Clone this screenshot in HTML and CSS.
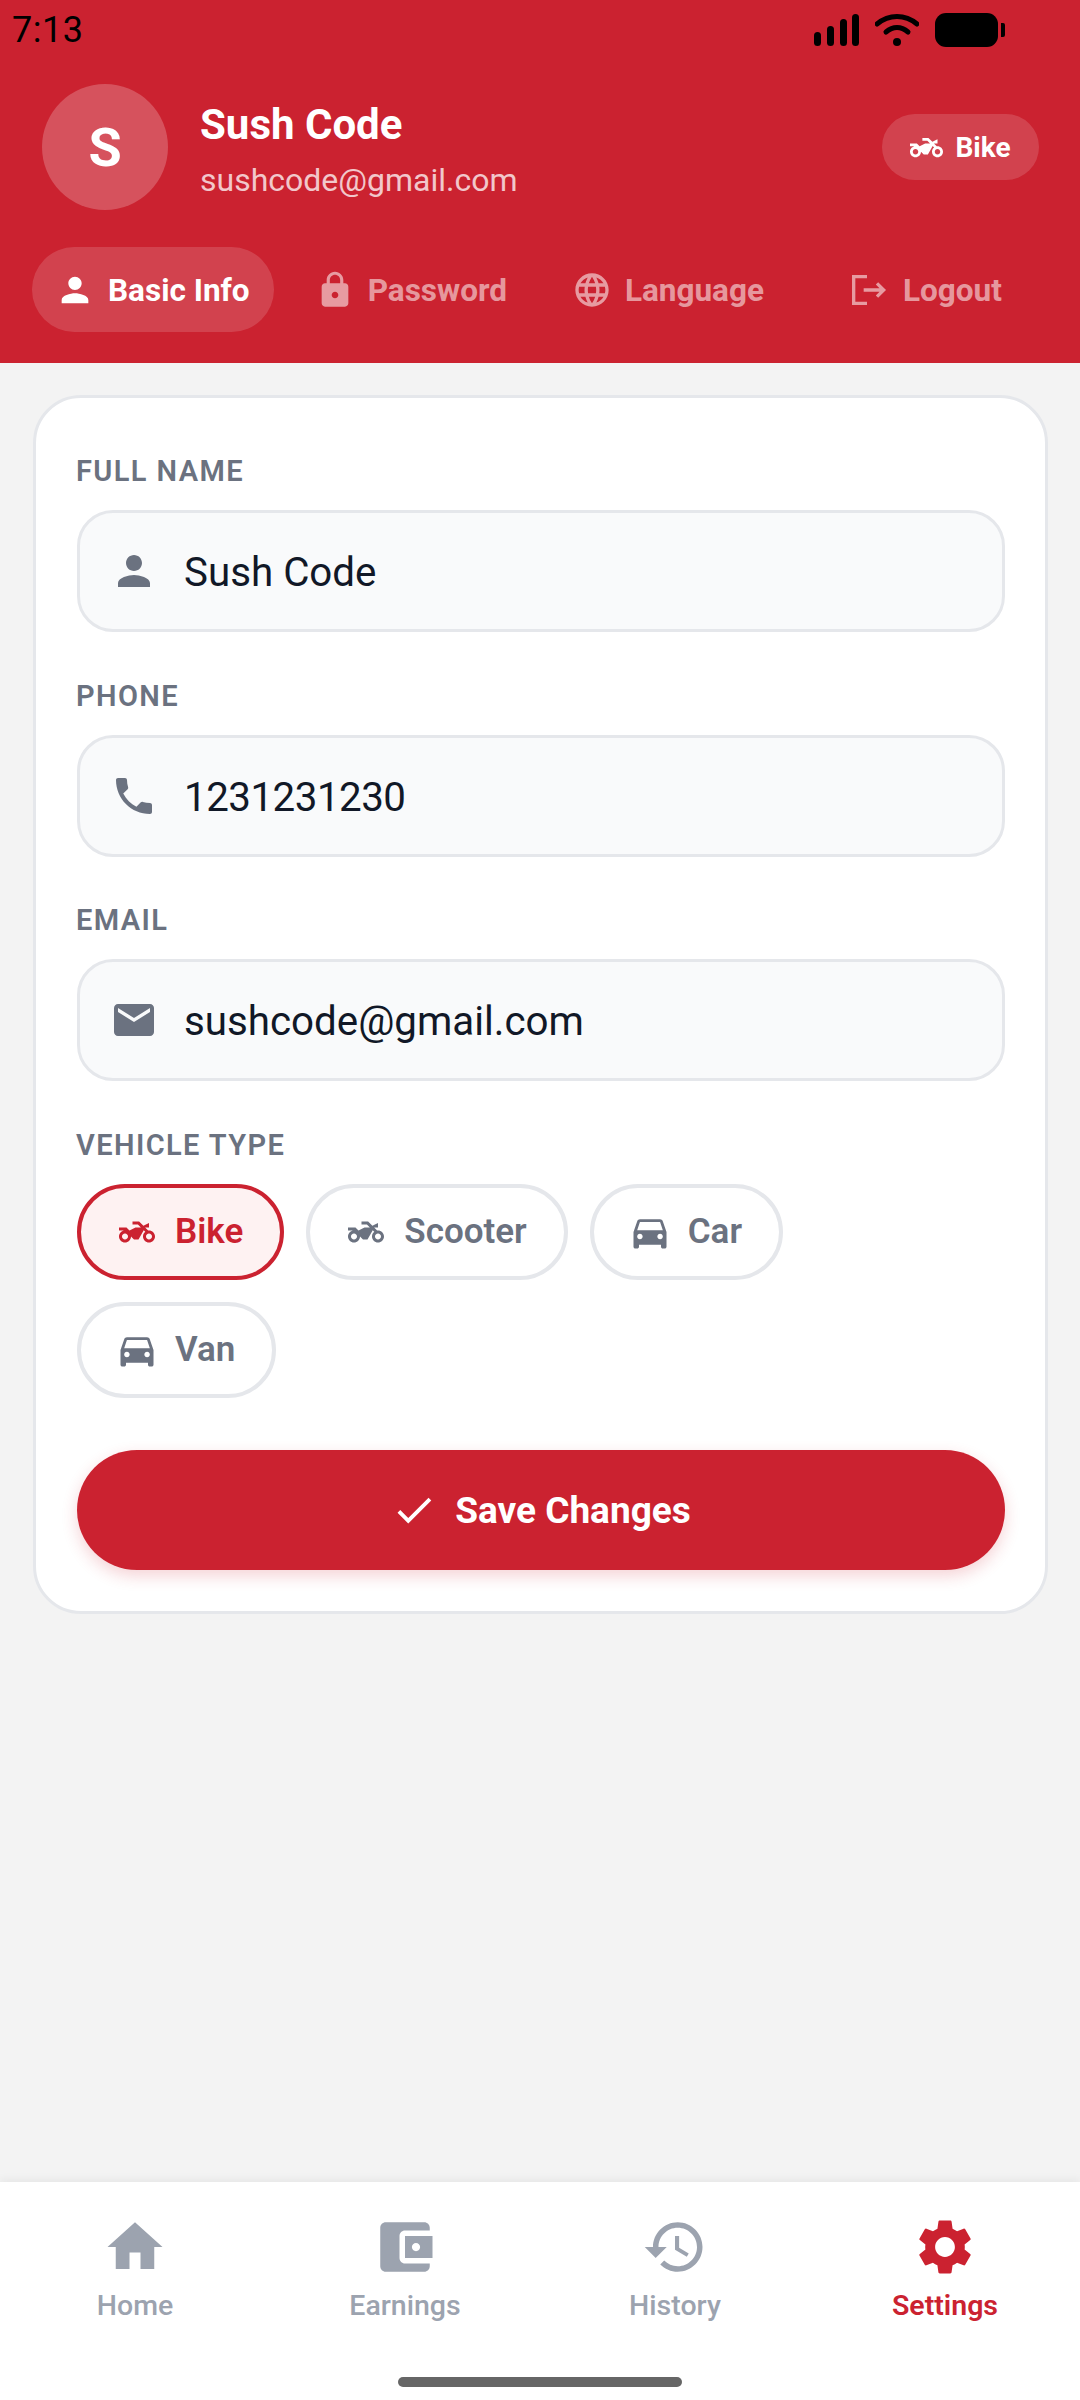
FILE: index.html
```html
<!DOCTYPE html>
<html lang="en">
<head>
    <meta charset="UTF-8">
    <meta name="viewport" content="width=device-width, initial-scale=1.0">
    <title>Settings</title>
    <link rel="stylesheet" href="styles.css">
</head>
<body>
    <svg class="defs" width="0" height="0">
        <symbol id="i-person" viewBox="0 0 24 24"><path d="M12 12c2.21 0 4-1.79 4-4s-1.79-4-4-4-4 1.79-4 4 1.79 4 4 4zm0 2c-2.67 0-8 1.34-8 4v2h16v-2c0-2.66-5.33-4-8-4z"/></symbol>
        <symbol id="i-lock" viewBox="0 0 24 24"><path d="M18 8h-1V6c0-2.76-2.24-5-5-5S7 3.24 7 6v2H6c-1.1 0-2 .9-2 2v10c0 1.1.9 2 2 2h12c1.1 0 2-.9 2-2V10c0-1.1-.9-2-2-2zm-6 9c-1.1 0-2-.9-2-2s.9-2 2-2 2 .9 2 2-.9 2-2 2zm3.1-9H8.9V6c0-1.71 1.39-3.1 3.1-3.1 1.71 0 3.1 1.39 3.1 3.1v2z"/></symbol>
        <symbol id="i-globe" viewBox="0 0 24 24"><path d="M11.99 2C6.47 2 2 6.48 2 12s4.47 10 9.99 10C17.52 22 22 17.52 22 12S17.52 2 11.99 2zm6.93 6h-2.95c-.32-1.25-.78-2.45-1.38-3.56 1.84.63 3.37 1.91 4.33 3.56zM12 4.04c.83 1.2 1.48 2.53 1.91 3.96h-3.82c.43-1.43 1.08-2.76 1.91-3.96zM4.26 14C4.1 13.36 4 12.69 4 12s.1-1.36.26-2h3.38c-.08.66-.14 1.32-.14 2s.06 1.34.14 2H4.26zm.82 2h2.95c.32 1.25.78 2.45 1.38 3.56-1.84-.63-3.37-1.9-4.33-3.56zm2.95-8H5.08c.96-1.66 2.49-2.93 4.33-3.56C8.81 5.55 8.35 6.75 8.03 8zM12 19.96c-.83-1.2-1.48-2.53-1.91-3.96h3.82c-.43 1.43-1.08 2.76-1.91 3.96zM14.34 14H9.66c-.09-.66-.16-1.32-.16-2s.07-1.35.16-2h4.68c.09.65.16 1.32.16 2s-.07 1.34-.16 2zm.25 5.56c.6-1.11 1.06-2.31 1.38-3.56h2.95c-.96 1.65-2.49 2.93-4.33 3.56zM16.36 14c.08-.66.14-1.32.14-2s-.06-1.34-.14-2h3.38c.16.64.26 1.31.26 2s-.1 1.36-.26 2h-3.38z"/></symbol>
        <symbol id="i-logout" viewBox="0 0 24 24"><path d="M12 4H4v16h8M10 12h12M18 8l4 4-4 4" fill="none" stroke="currentColor" stroke-width="2"/></symbol>
        <symbol id="i-phone" viewBox="0 0 24 24"><path d="M6.62 10.79c1.44 2.83 3.76 5.14 6.59 6.59l2.2-2.2c.27-.27.67-.36 1.02-.24 1.12.37 2.33.57 3.57.57.55 0 1 .45 1 1V20c0 .55-.45 1-1 1-9.39 0-17-7.61-17-17 0-.55.45-1 1-1h3.5c.55 0 1 .45 1 1 0 1.25.2 2.45.57 3.57.11.35.03.74-.25 1.02l-2.2 2.2z"/></symbol>
        <symbol id="i-mail" viewBox="0 0 24 24"><path d="M20 4H4c-1.1 0-1.99.9-1.99 2L2 18c0 1.1.9 2 2 2h16c1.1 0 2-.9 2-2V6c0-1.1-.9-2-2-2zm0 4l-8 5-8-5V6l8 5 8-5v2z"/></symbol>
        <symbol id="i-moto" viewBox="0 0 24 24"><path d="M20 11c-.18 0-.36.03-.53.05L17.41 9H20V6l-3.72 1.86L13.41 5H9v2h3.59l2 2H11l-4 2-2-2H0v2h4c-2.21 0-4 1.79-4 4s1.79 4 4 4 4-1.79 4-4l2 2h3l3.49-6.1 1.01 1.01c-.91.73-1.5 1.84-1.5 3.09 0 2.21 1.79 4 4 4s4-1.79 4-4-1.79-4-4-4zM4 17c-1.1 0-2-.9-2-2s.9-2 2-2 2 .9 2 2-.9 2-2 2zm16 0c-1.1 0-2-.9-2-2s.9-2 2-2 2 .9 2 2-.9 2-2 2z"/></symbol>
        <symbol id="i-car" viewBox="0 0 24 24"><path d="M18.92 6.01C18.72 5.42 18.16 5 17.5 5h-11c-.66 0-1.21.42-1.42 1.01L3 12v8c0 .55.45 1 1 1h1c.55 0 1-.45 1-1v-1h12v1c0 .55.45 1 1 1h1c.55 0 1-.45 1-1v-8l-2.08-5.99zM6.5 16c-.83 0-1.5-.67-1.5-1.5S5.67 13 6.5 13s1.5.67 1.5 1.5S7.33 16 6.5 16zm11 0c-.83 0-1.5-.67-1.5-1.5s.67-1.5 1.5-1.5 1.5.67 1.5 1.5-.67 1.5-1.5 1.5zM5 11l1.5-4.5h11L19 11H5z"/></symbol>
        <symbol id="i-check" viewBox="0 0 24 24"><path d="M9 16.17L4.83 12l-1.42 1.41L9 19 21 7l-1.41-1.41z"/></symbol>
        <symbol id="i-home" viewBox="0 0 24 24"><path d="M10 20v-6h4v6h5v-8h3L12 3 2 12h3v8z"/></symbol>
        <symbol id="i-wallet" viewBox="0 0 24 24"><path d="M21 18v1c0 1.1-.9 2-2 2H5c-1.11 0-2-.9-2-2V5c0-1.1.89-2 2-2h14c1.1 0 2 .9 2 2v1h-9c-1.11 0-2 .9-2 2v8c0 1.1.89 2 2 2h9zm-9-2h10V8H12v8zm4-2.5c-.83 0-1.5-.67-1.5-1.5s.67-1.5 1.5-1.5 1.5.67 1.5 1.5-.67 1.5-1.5 1.5z"/></symbol>
        <symbol id="i-history" viewBox="0 0 24 24"><path d="M13 3c-4.97 0-9 4.03-9 9H1l3.89 3.89.07.14L9 12H6c0-3.87 3.13-7 7-7s7 3.13 7 7-3.13 7-7 7c-1.93 0-3.68-.79-4.94-2.06l-1.42 1.42C8.27 19.99 10.51 21 13 21c4.97 0 9-4.03 9-9s-4.03-9-9-9zm-1 5v5l4.28 2.54.72-1.21-3.5-2.08V8H12z"/></symbol>
        <symbol id="i-gear" viewBox="0 0 24 24"><path d="M19.14 12.94c.04-.3.06-.61.06-.94 0-.32-.02-.64-.07-.94l2.03-1.58c.18-.14.23-.41.12-.61l-1.92-3.32c-.12-.22-.37-.29-.59-.22l-2.39.96c-.5-.38-1.03-.7-1.62-.94l-.36-2.54c-.04-.24-.24-.41-.48-.41h-3.84c-.24 0-.43.17-.47.41l-.36 2.54c-.59.24-1.13.57-1.62.94l-2.39-.96c-.22-.08-.47 0-.59.22L2.74 8.87c-.12.21-.08.47.12.61l2.03 1.58c-.05.3-.09.63-.09.94s.02.64.07.94l-2.03 1.58c-.18.14-.23.41-.12.61l1.92 3.32c.12.22.37.29.59.22l2.39-.96c.5.38 1.03.7 1.62.94l.36 2.54c.05.24.24.41.48.41h3.84c.24 0 .44-.17.47-.41l.36-2.54c.59-.24 1.13-.56 1.62-.94l2.39.96c.22.08.47 0 .59-.22l1.92-3.32c.12-.22.07-.47-.12-.61l-2.01-1.58zM12 15.6c-1.98 0-3.6-1.62-3.6-3.6s1.62-3.6 3.6-3.6 3.6 1.62 3.6 3.6-1.62 3.6-3.6 3.6z"/></symbol>
    </svg>

    <div class="screen">
        <header class="header">
            <div class="status-bar">
                <span class="status-time">7:13</span>
                <div class="status-icons">
                    <svg width="45" height="32" viewBox="0 0 45 32" class="status-signal">
                        <rect x="0" y="18" width="7" height="14" rx="3.5"/>
                        <rect x="13" y="12" width="7" height="20" rx="3.5"/>
                        <rect x="26" y="5" width="7" height="27" rx="3.5"/>
                        <rect x="38" y="0" width="7" height="32" rx="3.5"/>
                    </svg>
                    <svg width="44" height="32" viewBox="0 0 44 32" class="status-wifi">
                        <path d="M2 10 C14 0 30 0 42 10" fill="none" stroke="#000" stroke-width="5" stroke-linecap="round"/>
                        <path d="M11 18 C18 12 26 12 33 18" fill="none" stroke="#000" stroke-width="5" stroke-linecap="round"/>
                        <circle cx="22" cy="28" r="4"/>
                    </svg>
                    <div class="status-battery"></div>
                    <div class="status-cap"></div>
                </div>
            </div>

            <div class="profile">
                <div class="avatar">S</div>
                <div class="profile-text">
                    <div class="profile-name">Sush Code</div>
                    <div class="profile-email">sushcode@gmail.com</div>
                </div>
                <div class="badge">
                    <svg class="icon-badge"><use href="#i-moto"/></svg>
                    <span>Bike</span>
                </div>
            </div>

            <nav class="tabs">
                <div class="tab tab-active"><svg class="icon-tab"><use href="#i-person"/></svg><span class="tab-text">Basic Info</span></div>
                <div class="tab"><svg class="icon-tab"><use href="#i-lock"/></svg><span class="tab-text">Password</span></div>
                <div class="tab"><svg class="icon-tab"><use href="#i-globe"/></svg><span class="tab-text">Language</span></div>
                <div class="tab tab-logout"><svg class="icon-tab"><use href="#i-logout"/></svg><span class="tab-text">Logout</span></div>
            </nav>
        </header>

        <main class="content">
            <section class="card">
                <label class="field-label">FULL NAME</label>
                <div class="field">
                    <svg class="icon-field"><use href="#i-person"/></svg>
                    <span class="field-text">Sush Code</span>
                </div>
                <label class="field-label">PHONE</label>
                <div class="field">
                    <svg class="icon-field"><use href="#i-phone"/></svg>
                    <span class="field-text field-phone">1231231230</span>
                </div>
                <label class="field-label">EMAIL</label>
                <div class="field">
                    <svg class="icon-field"><use href="#i-mail"/></svg>
                    <span class="field-text">sushcode@gmail.com</span>
                </div>
                <label class="field-label">VEHICLE TYPE</label>
                <div class="chips">
                    <div class="chip chip-active"><svg class="icon-chip"><use href="#i-moto"/></svg>Bike</div>
                    <div class="chip"><svg class="icon-chip"><use href="#i-moto"/></svg>Scooter</div>
                    <div class="chip"><svg class="icon-car"><use href="#i-car"/></svg>Car</div>
                    <div class="chip"><svg class="icon-car"><use href="#i-car"/></svg>Van</div>
                </div>
                <button class="save-btn"><svg class="icon-save"><use href="#i-check"/></svg>Save Changes</button>
            </section>
        </main>

        <footer class="bottom-nav">
            <div class="nav-items">
                <div class="nav-item"><svg class="icon-nav"><use href="#i-home"/></svg>Home</div>
                <div class="nav-item"><svg class="icon-nav"><use href="#i-wallet"/></svg>Earnings</div>
                <div class="nav-item"><svg class="icon-nav"><use href="#i-history"/></svg>History</div>
                <div class="nav-item nav-active"><svg class="icon-nav"><use href="#i-gear"/></svg>Settings</div>
            </div>
            <div class="home-pill"></div>
        </footer>
    </div>
</body>
</html>
```

FILE: styles.css
```css
* {
    box-sizing: border-box;
}
body {
    margin: 0;
    font-family: Roboto, "Liberation Sans", sans-serif;
    background-color: #f3f3f3;
}
svg {
    fill: currentColor;
    flex-shrink: 0;
}
.defs {
    display: none;
}
.screen {
    width: 1080px;
    height: 2400px;
    display: flex;
    flex-direction: column;
}

/* header */
.header {
    height: 363px;
    background-color: #cb2230;
    color: #fff;
}
.status-bar {
    height: 60px;
    display: flex;
    align-items: center;
    justify-content: space-between;
    padding: 0 75px 0 12px;
    color: #000;
}
.status-time {
    font-size: 36px;
    letter-spacing: 0.5px;
}
.status-icons {
    display: flex;
    align-items: center;
}
.status-signal {
    margin-right: 16px;
}
.status-wifi {
    margin-right: 16px;
}
.status-battery {
    width: 63px;
    height: 34px;
    background-color: #000;
    border-radius: 11px;
}
.status-cap {
    width: 4px;
    height: 14px;
    margin-left: 3px;
    background-color: #000;
    border-radius: 0 2px 2px 0;
}
.profile {
    display: flex;
    align-items: center;
    padding: 24px 42px 0;
}
.avatar {
    width: 126px;
    height: 126px;
    border-radius: 50%;
    background-color: rgba(255, 255, 255, 0.22);
    display: flex;
    align-items: center;
    justify-content: center;
    font-size: 54px;
    font-weight: 700;
}
.profile-text {
    flex: 1;
    margin-left: 32px;
    margin-top: 6px;
}
.profile-name {
    font-size: 42px;
    font-weight: 700;
    line-height: 50px;
}
.profile-email {
    font-size: 32px;
    line-height: 42px;
    margin-top: 9px;
    color: rgba(255, 255, 255, 0.75);
}
.badge {
    width: 157px;
    height: 66px;
    margin-right: -1px;
    border-radius: 33px;
    background-color: rgba(255, 255, 255, 0.15);
    display: flex;
    align-items: center;
    justify-content: center;
    gap: 12px;
    font-size: 28px;
    font-weight: 700;
}
.icon-badge {
    width: 33px;
    height: 33px;
}
.tabs {
    display: flex;
    align-items: center;
    margin-top: 37px;
    padding: 0 32px;
    font-size: 31.5px;
    font-weight: 700;
    color: rgba(255, 255, 255, 0.55);
}
.tab {
    height: 85px;
    display: flex;
    align-items: center;
    gap: 13px;
    padding: 0 24px 0 23px;
    margin-right: 18px;
    border-radius: 43px;
}
.tab-text {
    margin-top: 2px;
}
.tab-active {
    background-color: rgba(255, 255, 255, 0.15);
    color: #fff;
}
.tab-logout {
    gap: 16px;
    margin-left: 18px;
    margin-right: 0;
}
.icon-tab {
    width: 40px;
    height: 40px;
}

/* card */
.content {
    flex: 1;
    padding: 32px 32px 0 33px;
}
.card {
    background-color: #fff;
    border: 3px solid #e5e7eb;
    border-radius: 48px;
    padding: 56px 40px 41px 41px;
}
.field-label {
    display: block;
    font-size: 29px;
    font-weight: 600;
    line-height: 32px;
    letter-spacing: 1.4px;
    color: #6b7280;
    margin: 1px 0 23px -1px;
}
.field {
    height: 122px;
    margin-bottom: 47.5px;
    padding: 0 30px;
    display: flex;
    align-items: center;
    gap: 26px;
    background-color: #f9fafb;
    border: 3px solid #e5e7eb;
    border-radius: 36px;
    font-size: 40.3px;
    color: #111827;
}
.field-text {
    margin-top: 3px;
}
.field-phone {
    letter-spacing: -0.5px;
}
.icon-field {
    width: 48px;
    height: 48px;
    color: #6b7280;
}
.chips {
    display: flex;
    flex-wrap: wrap;
    gap: 22px;
    padding-right: 40px;
}
.chip {
    height: 96px;
    padding: 0 37px 0 38px;
    display: flex;
    align-items: center;
    gap: 20px;
    background-color: #fff;
    border: 4px solid #e5e7eb;
    border-radius: 48px;
    font-size: 35px;
    font-weight: 600;
    color: #6b7280;
}
.chip-active {
    background-color: #fef2f2;
    border-color: #cb2230;
    color: #cb2230;
}
.icon-chip {
    width: 36px;
    height: 36px;
}
.icon-car {
    width: 44px;
    height: 44px;
    margin: 0 -4px;
}
.save-btn {
    width: 100%;
    height: 120px;
    margin-top: 52.5px;
    display: flex;
    align-items: center;
    justify-content: center;
    gap: 18px;
    background-color: #cb2230;
    color: #fff;
    border: none;
    border-radius: 60px;
    font-family: inherit;
    font-size: 37px;
    font-weight: 700;
    box-shadow: 0 6px 16px rgba(203, 34, 48, 0.2);
}
.icon-save {
    width: 46px;
    height: 46px;
}

/* bottom nav */
.bottom-nav {
    height: 218px;
    background-color: #fff;
    box-shadow: 0 -3px 8px rgba(0, 0, 0, 0.05);
    position: relative;
}
.nav-items {
    display: grid;
    grid-template-columns: repeat(4, 1fr);
    padding: 32px 0 0;
}
.nav-item {
    display: flex;
    flex-direction: column;
    align-items: center;
    gap: 9px;
    font-size: 28.5px;
    font-weight: 500;
    color: #9ca3af;
}
.nav-active {
    color: #cb2230;
    font-weight: 600;
}
.icon-nav {
    width: 66px;
    height: 66px;
}
.home-pill {
    position: absolute;
    left: 398px;
    bottom: 13px;
    width: 284px;
    height: 10px;
    border-radius: 5px;
    background-color: #666;
}
```
